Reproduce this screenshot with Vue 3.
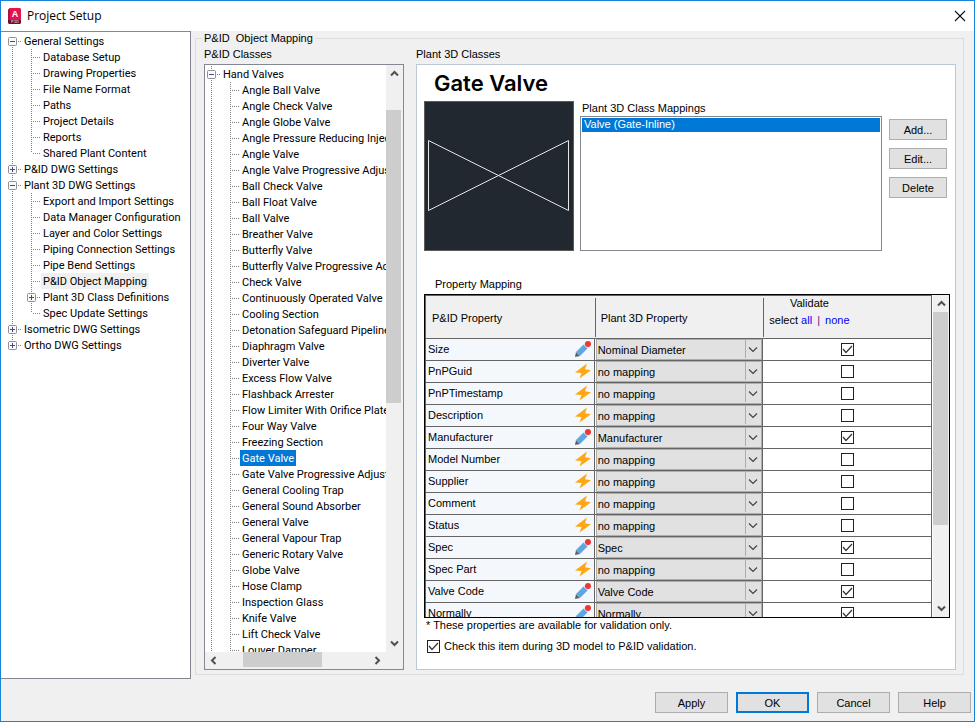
<script setup>
import { ref, h } from 'vue'

const settings = ref([
  { text: 'General Settings', depth: 0, box: '-', first: true },
  { text: 'Database Setup', depth: 1 },
  { text: 'Drawing Properties', depth: 1 },
  { text: 'File Name Format', depth: 1 },
  { text: 'Paths', depth: 1 },
  { text: 'Project Details', depth: 1 },
  { text: 'Reports', depth: 1 },
  { text: 'Shared Plant Content', depth: 1, last: true },
  { text: 'P&ID DWG Settings', depth: 0, box: '+' },
  { text: 'Plant 3D DWG Settings', depth: 0, box: '-' },
  { text: 'Export and Import Settings', depth: 1 },
  { text: 'Data Manager Configuration', depth: 1 },
  { text: 'Layer and Color Settings', depth: 1 },
  { text: 'Piping Connection Settings', depth: 1 },
  { text: 'Pipe Bend Settings', depth: 1 },
  { text: 'P&ID Object Mapping', depth: 1, current: true },
  { text: 'Plant 3D Class Definitions', depth: 1, box: '+' },
  { text: 'Spec Update Settings', depth: 1, last: true },
  { text: 'Isometric DWG Settings', depth: 0, box: '+' },
  { text: 'Ortho DWG Settings', depth: 0, box: '+', last: true },
])

const valves = [
  'Angle Ball Valve', 'Angle Check Valve', 'Angle Globe Valve',
  'Angle Pressure Reducing Injection Valve', 'Angle Valve', 'Angle Valve Progressive Adjustable',
  'Ball Check Valve', 'Ball Float Valve', 'Ball Valve', 'Breather Valve', 'Butterfly Valve',
  'Butterfly Valve Progressive Adjustable', 'Check Valve', 'Continuously Operated Valve',
  'Cooling Section', 'Detonation Safeguard Pipeline', 'Diaphragm Valve', 'Diverter Valve',
  'Excess Flow Valve', 'Flashback Arrester', 'Flow Limiter With Orifice Plate', 'Four Way Valve',
  'Freezing Section', 'Gate Valve', 'Gate Valve Progressive Adjustable', 'General Cooling Trap',
  'General Sound Absorber', 'General Valve', 'General Vapour Trap', 'Generic Rotary Valve',
  'Globe Valve', 'Hose Clamp', 'Inspection Glass', 'Knife Valve', 'Lift Check Valve', 'Louver Damper',
]
const classes = [
  { text: 'Hand Valves', depth: 0, box: '-' },
  ...valves.map((text) => ({ text, depth: 1, selected: text === 'Gate Valve' })),
]

const none = 'no mapping'
const rows = ref([
  { name: 'Size', value: 'Nominal Diameter', on: true },
  { name: 'PnPGuid', value: none, on: false },
  { name: 'PnPTimestamp', value: none, on: false },
  { name: 'Description', value: none, on: false },
  { name: 'Manufacturer', value: 'Manufacturer', on: true },
  { name: 'Model Number', value: none, on: false },
  { name: 'Supplier', value: none, on: false },
  { name: 'Comment', value: none, on: false },
  { name: 'Status', value: none, on: false },
  { name: 'Spec', value: 'Spec', on: true },
  { name: 'Spec Part', value: none, on: false },
  { name: 'Valve Code', value: 'Valve Code', on: true },
  { name: 'Normally', value: 'Normally', on: true },
])
const checkItem = ref(true)
const mapping = ref('Valve (Gate-Inline)')
const setAll = (on) => rows.value.forEach((r) => { r.on = on })

// Connector lines and expander box of one tree row, 19x16 per level.
const Guide = ({ node }) => {
  const line = (x1, y1, x2, y2) =>
    h('line', { x1, y1, x2, y2, stroke: '#808080', 'stroke-dasharray': '1 1', 'shape-rendering': 'crispEdges' })
  const x = node.depth * 19 + 9.5
  const parts = []
  if (node.depth) parts.push(line(9.5, 0, 9.5, 16))
  parts.push(line(x, node.first ? 8 : 0, x, node.last ? 8 : 16))
  parts.push(line(x + 1.5, 8.5, x + 9, 8.5))
  if (node.box) {
    parts.push(h('rect', { x: x - 4, y: 4.5, width: 8, height: 8, rx: 1, fill: '#fafafa', stroke: '#919191' }))
    parts.push(h('path', {
      d: `M${x - 2.5} 8.5h5` + (node.box === '+' ? `M${x} 6v5` : ''), stroke: '#3c4f96', fill: 'none',
    }))
  }
  const w = (node.depth + 1) * 19
  return h('svg', { width: w, height: 16, viewBox: `0 0 ${w} 16`, 'aria-hidden': 'true' }, parts)
}
Guide.props = ['node']

const turns = { up: 0, right: 90, down: 180, left: 270 }
const Arrow = ({ dir }) =>
  h('svg', { width: 17, height: 17, viewBox: '0 0 17 17', 'aria-hidden': 'true' }, [
    h('path', {
      d: 'M5 10.5l3.5-3.5 3.5 3.5', fill: 'none', stroke: '#505050', 'stroke-width': 2,
      transform: `rotate(${turns[dir]} 8.5 8.5)`,
    }),
  ])
Arrow.props = ['dir']
</script>

<template>
  <div class="window">
    <header class="titlebar">
      <svg class="logo" width="15" height="17" viewBox="0 0 15 17" aria-hidden="true">
        <path d="M1 2l2-2h10l1 1v11H1z" fill="#e5134f" />
        <path d="M1 2l2-2v12H1z" fill="#b30f3d" />
        <path d="M1 12h13v3l-1 1H2l-1-1z" fill="#6b0f2b" />
        <text x="8" y="9" text-anchor="middle" class="logo-a">A</text>
        <text x="8" y="15" text-anchor="middle" class="logo-p">P3D</text>
      </svg>
      <h1>Project Setup</h1>
      <button class="close" aria-label="Close">
        <svg width="12" height="12" viewBox="0 0 12 12"><path d="M1 1l10 10M11 1L1 11" stroke="#111" stroke-width="1.1" /></svg>
      </button>
    </header>

    <div class="body">
      <nav class="sidebar">
        <ul class="tree">
          <li v-for="n in settings" :key="n.text">
            <Guide :node="n" /><span class="node" :class="{ current: n.current }">{{ n.text }}</span>
          </li>
        </ul>
      </nav>

      <fieldset class="group">
        <legend>P&amp;ID&nbsp; Object Mapping</legend>
        <section class="classes">
          <h2>P&amp;ID Classes</h2>
          <div class="class-box">
            <ul class="tree scrolled">
              <li v-for="n in classes" :key="n.text">
                <Guide :node="n" /><span class="node" :class="{ selected: n.selected }">{{ n.text }}</span>
              </li>
            </ul>
            <div class="bar vertical">
              <Arrow dir="up" />
              <div class="track"><div class="skip tree-skip"></div><div class="thumb tree-thumb"></div></div>
              <Arrow dir="down" />
            </div>
            <div class="bar horizontal">
              <Arrow dir="left" />
              <div class="track"><div class="skip wide-skip"></div><div class="thumb wide-thumb"></div></div>
              <Arrow dir="right" />
            </div>
            <div class="bar"></div>
          </div>
        </section>

        <section class="details">
          <h2>Plant 3D Classes</h2>
          <div class="panel">
            <h3>Gate Valve</h3>
            <div class="top">
              <svg class="preview" width="150" height="150" viewBox="0 0 150 150" role="img" aria-label="Gate valve symbol">
                <rect x=".5" y=".5" width="149" height="149" fill="#212830" stroke="#5c5c5c" />
                <path d="M4.5 39.500L144.500 109.500V39.500L4.500 109.500z" fill="none" stroke="#e6e8ea" />
              </svg>
              <div class="mappings">
                <label for="mapping">Plant 3D Class Mappings</label>
                <select id="mapping" v-model="mapping" size="8" class="listbox">
                  <option>Valve (Gate-Inline)</option>
                </select>
              </div>
              <div class="actions">
                <button>Add...</button>
                <button>Edit...</button>
                <button>Delete</button>
              </div>
            </div>

            <h4>Property Mapping</h4>
            <div class="grid">
              <div class="viewport">
                <table>
                  <thead>
                    <tr>
                      <th><div class="head">P&amp;ID Property</div></th>
                      <th><div class="head split">Plant 3D Property</div></th>
                      <th>
                        <div class="head split validate">
                          <div class="select-all">Validate<br>select <a href="#" @click.prevent="setAll(true)">all</a> <i>|</i> <a href="#" @click.prevent="setAll(false)">none</a></div>
                        </div>
                      </th>
                    </tr>
                  </thead>
                  <tbody>
                    <tr v-for="r in rows" :key="r.name">
                      <td class="name">
                        <div class="name-cell">
                          <span>{{ r.name }}</span>
                          <svg v-if="r.value !== none" width="16" height="16" viewBox="0 0 16 16" aria-hidden="true">
                            <path d="M0 16l1-5 4 4z" fill="#606060" />
                            <path d="M1 11l7.500-7.500 4 4-7.500 7.500z" fill="#5ea7e0" />
                            <path d="M8.500 3.500l1.800-1.800 4 4-1.800 1.800z" fill="#d5dce2" />
                            <circle cx="13" cy="3" r="3" fill="#f03535" />
                          </svg>
                          <svg v-else width="16" height="16" viewBox="0 0 16 16" aria-hidden="true">
                            <path d="M12 .5L0 9.500l6.500.5L4.500 15.500 16 7.200 10 6.200z" fill="#ffa712" />
                          </svg>
                        </div>
                      </td>
                      <td>
                        <div class="combo">
                          <select v-model="r.value" :aria-label="r.name + ' mapping'">
                            <option>{{ r.value }}</option>
                          </select>
                          <svg width="17" height="20" viewBox="0 0 17 20" aria-hidden="true">
                            <path d="M.5 1v18" stroke="#adadad" /><path d="M4 8.500l4 4 4-4" fill="none" stroke="#444" stroke-width="1.200" />
                          </svg>
                        </div>
                      </td>
                      <td>
                        <div class="check">
                          <input v-model="r.on" type="checkbox" :aria-label="'Validate ' + r.name">
                          <svg v-if="r.on" width="13" height="13" viewBox="0 0 13 13" aria-hidden="true"><path d="M2 6l3 3.500 6-6.500" /></svg>
                        </div>
                      </td>
                    </tr>
                  </tbody>
                </table>
              </div>
              <div class="bar vertical narrow">
                <Arrow dir="up" />
                <div class="track"><div class="thumb table-thumb"></div></div>
                <Arrow dir="down" />
              </div>
            </div>
            <p class="note">* These properties are available for validation only.</p>
            <label class="item-check">
              <span class="check">
                <input v-model="checkItem" type="checkbox">
                <svg v-if="checkItem" width="13" height="13" viewBox="0 0 13 13" aria-hidden="true"><path d="M2 6l3 3.500 6-6.500" /></svg>
              </span>
              Check this item during 3D model to P&amp;ID validation.
            </label>
          </div>
        </section>
      </fieldset>
    </div>

    <footer class="footer">
      <button>Apply</button>
      <button class="default">OK</button>
      <button>Cancel</button>
      <button>Help</button>
    </footer>
  </div>
</template>

<style>
body { margin: 0; }
</style>

<style scoped>
* { box-sizing: border-box; }
.window {
  display: flex; flex-direction: column; height: 100vh;
  border: 1px solid #1883d7; background: #f0f0f0; color: #000;
  font: 11px/16px "Liberation Sans", Arial, sans-serif;
}
h1, h2, h3, h4, p, ul { margin: 0; padding: 0; font-size: 11px; font-weight: 400; }
button, select, input { font: inherit; color: inherit; margin: 0; }
svg { display: block; flex: none; }

.titlebar { display: flex; align-items: center; height: 30px; padding: 0 8px 0 6px; background: #fff; }
.titlebar h1 { flex: 1; margin-left: 5px; font: 12px/16px "Open Sans", "Noto Sans", sans-serif; }
.logo-a { font: bold 9px "Liberation Sans", sans-serif; fill: #fff; }
.logo-p { font: bold 4px "Liberation Sans", sans-serif; fill: #d9a5b4; }
.close { display: grid; padding: 0; border: 0; background: none; }

.body { display: flex; flex: 1; min-height: 0; }
.sidebar {
  flex: none; width: 190px; padding: 1px 0 0 2px; background: #fff;
  border: 1px solid #828790; border-left: 0;
}
.tree { list-style: none; white-space: nowrap; font-family: Roboto, "Liberation Sans", sans-serif; }
.tree li { display: flex; height: 16px; }
.node { padding: 0 2px; line-height: 18px; }
.current { background: #f0f0f0; }
.selected { background: #0078d7; color: #fff; }

.group {
  display: flex; flex: 1; gap: 12px; min-width: 0; min-height: 0;
  margin: 0 10px 4px 4px; padding: 0 7px 4px 8px; border: 1px solid #dcdcdc;
}
legend { padding: 0 2px; margin-left: -2px; line-height: 14px; }
h2 { padding-bottom: 1px; line-height: 18px; }
.classes { display: flex; flex-direction: column; flex: none; width: 200px; }
.class-box {
  display: grid; flex: 1; grid-template: minmax(0, 1fr) 17px / minmax(0, 1fr) 17px;
  min-height: 0; border: 1px solid #828790; background: #fff;
}
.scrolled { overflow: hidden; margin-left: 1px; padding-top: 1px; }
.scrolled li { margin-left: -4px; }

.bar { display: flex; background: #f0f0f0; }
.bar.vertical { flex-direction: column; width: 17px; }
.bar.narrow { width: 16px; }
.track { display: flex; flex: 1; min-height: 0; flex-direction: inherit; }
.thumb { background: #cdcdcd; }
.vertical .thumb { width: 15px; }
.horizontal .thumb { height: 15px; }
.tree-skip { height: 5%; }
.tree-thumb { height: 53%; }
.wide-skip { width: 14%; }
.wide-thumb { width: 54%; }
.table-thumb { height: 74%; }

.details { display: flex; flex: 1; flex-direction: column; min-width: 0; }
.panel {
  display: flex; flex: 1; flex-direction: column; min-height: 0;
  padding: 0 4px 15px 7px; border: 1px solid #bcc8d4; background: #fff;
}
h3 { padding: 4px 0 4px 10px; font: 600 22px/28px Inter, "Liberation Sans", sans-serif; }
.top { display: flex; padding-right: 4px; }
.mappings { display: flex; flex: 1; flex-direction: column; margin: 0 7px 0 6px; }
.mappings label { padding-left: 2px; line-height: 15px; }
.listbox {
  flex: 1; min-height: 0; padding: 1px; border: 1px solid #828790; border-radius: 0;
  background: #fff; outline: 0; overflow: hidden;
}
.listbox option { min-height: 14px; padding: 0 2px; line-height: 14px; }
.listbox option:checked { background: #0078d7 linear-gradient(#0078d7, #0078d7); color: #fff; }
.actions { display: flex; flex-direction: column; gap: 8px; width: 58px; padding-top: 18px; }
.actions button, .footer button {
  height: 21px; padding: 0; border: 1px solid #adadad; border-radius: 0; background: #e1e1e1;
}
h4 { padding: 25px 0 2px 11px; }

.grid {
  display: flex; flex: 1; min-height: 0; margin-right: 1px; border: 1px solid #000;
}
.viewport { flex: 1; overflow: hidden; margin-right: 1px; border: solid #646464; border-width: 1px 0 0 1px; }
table { width: 100%; table-layout: fixed; border-collapse: separate; border-spacing: 0; }
th { padding: 0; height: 43px; background: #f0f0f0; border-bottom: 1px solid #646464; font-weight: 400; text-align: left; }
th:last-child { border-right: 1px solid #646464; }
.head { display: flex; align-items: center; height: 39px; padding: 2px 0 0 6px; }
.split { border-left: 1px solid #646464; padding-left: 5px; }
.validate { align-items: flex-start; }
.select-all { text-align: center; line-height: 17px; margin-top: -5px; }
.select-all a { color: #00f; text-decoration: none; }
.select-all i { margin: 0 2px; color: #551a8b; font-style: normal; }
td { height: 22px; padding: 0; border: solid #646464; border-width: 0 1px 1px 0; }
.name { background: #f4f8fd; }
.name-cell { display: flex; align-items: center; justify-content: space-between; height: 21px; padding: 0 3px 1px 2px; }
.combo { display: grid; height: 21px; padding-left: 1px; }
.combo select {
  grid-area: 1 / 1; width: 100%; min-width: 0; padding: 0 0 0 1px; appearance: none;
  border: 1px solid #adadad; border-radius: 0; background: #e1e1e1;
}
.combo svg { grid-area: 1 / 1; justify-self: end; pointer-events: none; }
.check { display: grid; place-content: center; }
.check input { grid-area: 1 / 1; width: 13px; height: 13px; appearance: none; border: 1px solid #222; background: #fff; }
.check svg { grid-area: 1 / 1; pointer-events: none; fill: none; stroke: #333; stroke-width: 1.2px; }

.note { padding-left: 2px; line-height: 15px; }
.item-check { display: flex; align-items: center; gap: 4px; margin-top: 5px; padding-left: 3px; }

.footer { display: flex; justify-content: flex-end; gap: 8px; padding: 13px 3px 8px; }
.footer button { width: 73px; }
.footer .default { border: 2px solid #0078d7; }
</style>
